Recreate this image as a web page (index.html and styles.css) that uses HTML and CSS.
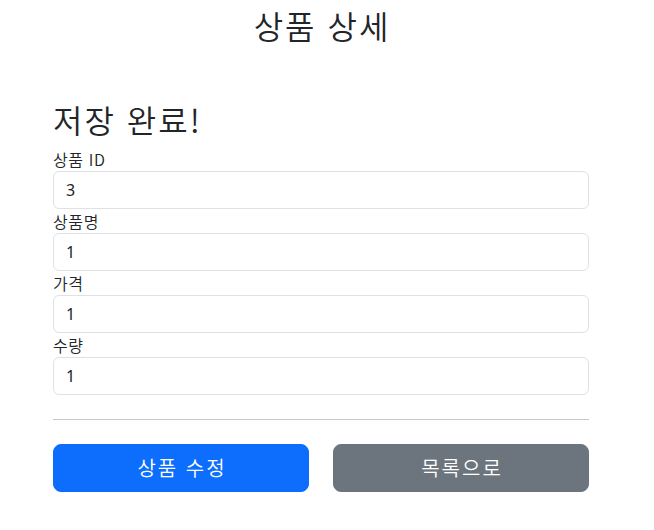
FILE: index.html
```html
<!DOCTYPE html>
<html lang="ko">
<head>
<meta charset="utf-8">
<title>상품 상세</title>
<link rel="stylesheet" href="styles.css">
</head>
<body>
<div class="page">
  <div class="container">
    <div class="header">
      <h2 class="title">상품 상세</h2>
    </div>
    <h2 class="title">저장 완료!</h2>
    <div class="field">
      <label class="label" for="itemId">상품 ID</label>
      <input type="text" id="itemId" class="form-control" value="3" readonly>
    </div>
    <div class="field">
      <label class="label" for="itemName">상품명</label>
      <input type="text" id="itemName" class="form-control" value="1" readonly>
    </div>
    <div class="field">
      <label class="label" for="price">가격</label>
      <input type="text" id="price" class="form-control" value="1" readonly>
    </div>
    <div class="field">
      <label class="label" for="quantity">수량</label>
      <input type="text" id="quantity" class="form-control" value="1" readonly>
    </div>
    <hr class="divider">
    <div class="row">
      <button class="btn btn-primary" type="button">상품 수정</button>
      <button class="btn btn-secondary" type="button">목록으로</button>
    </div>
  </div>
</div>
</body>
</html>
```

FILE: styles.css
```css
* { box-sizing: border-box; }
html, body {
  margin: 0;
  padding: 0;
  background: #fff;
}
body {
  font-family: "Segoe UI", "Noto Sans", "Noto Sans CJK KR", sans-serif;
  font-size: 16px;
  line-height: 1.5;
  color: #212529;
}
.page {
  width: 642px;
}
.container {
  width: 560px;
  margin: 0 auto;
  padding: 0 12px;
}
.header {
  padding-top: 6px;
  padding-bottom: 48px;
  text-align: center;
}
.header .title {
  padding-left: 2px;
}
.title {
  margin: 0 0 8px;
  font-family: "Noto Sans CJK KR", "Noto Sans", sans-serif;
  font-size: 32px;
  font-weight: 350;
  line-height: 1.2;
  letter-spacing: 2px;
}
.field {
  display: flex;
  flex-direction: column;
}
.label {
  display: block;
  height: 24px;
  line-height: 24px;
  font-family: "Noto Sans CJK KR", sans-serif;
  font-size: 16px;
  font-weight: 350;
  letter-spacing: 0.6px;
  color: #212529;
}
.form-control {
  display: block;
  width: 100%;
  height: 38px;
  padding: 6px 12px;
  font-family: "Segoe UI", "Noto Sans", sans-serif;
  font-size: 16px;
  line-height: 24px;
  color: #212529;
  background: #fff;
  border: 1px solid #dee2e6;
  border-radius: 6px;
  outline: none;
}
.divider {
  margin: 24px 0;
  border: 0;
  border-top: 1px solid #212529;
  opacity: 0.25;
}
.row {
  display: grid;
  grid-template-columns: 1fr 1fr;
  column-gap: 24px;
}
.btn {
  display: block;
  width: 100%;
  height: 48px;
  padding: 8px 14px 8px 16px;
  font-family: "Noto Sans CJK KR", sans-serif;
  font-size: 20px;
  font-weight: 350;
  line-height: 30px;
  letter-spacing: 2px;
  color: #fff;
  border: 1px solid transparent;
  border-radius: 8px;
  text-align: center;
  cursor: pointer;
}
.btn-primary {
  background: #0d6efd;
  border-color: #0d6efd;
}
.btn-secondary {
  background: #6c757d;
  border-color: #6c757d;
}
```
